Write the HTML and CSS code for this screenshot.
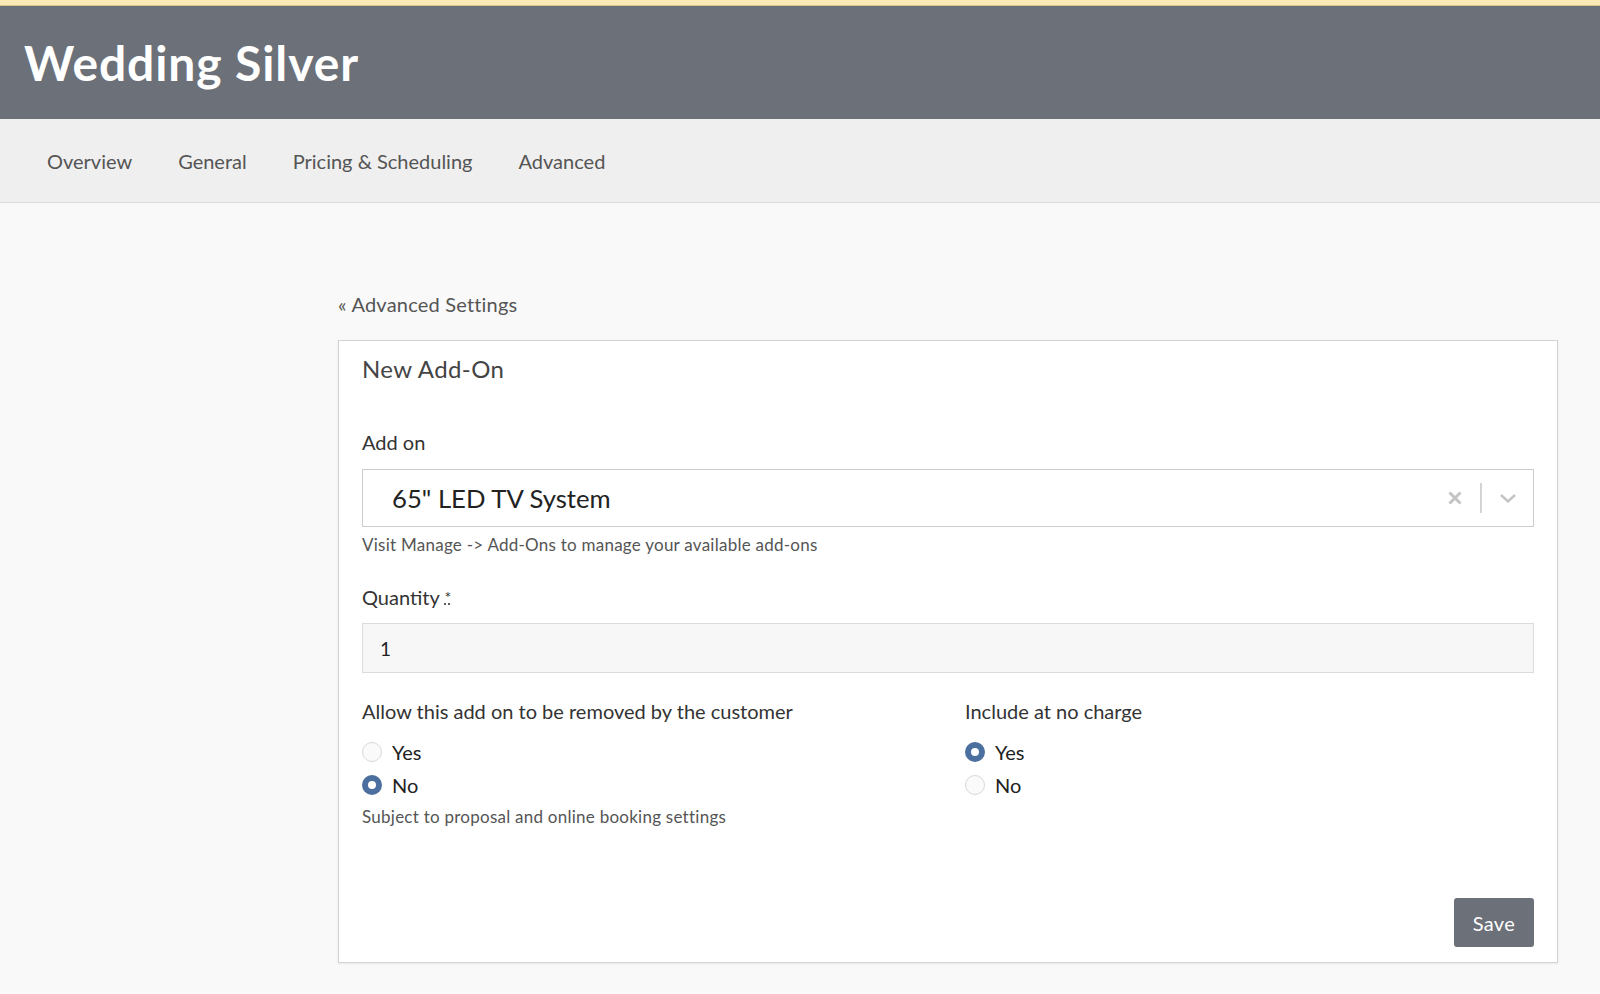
FILE: index.html
```html
<!DOCTYPE html>
<html lang="en">
<head>
  <meta charset="UTF-8" />
  <title>Wedding Silver - New Add-On</title>
  <link rel="stylesheet" href="styles.css">
</head>

<body>
  <div class="top-strip"></div>

  <!-- Package header -->
  <header class="page-header">
    <h1>Wedding Silver</h1>
  </header>

  <!-- Tabs -->
  <nav class="tabs">
    <a href="#">Overview</a>
    <a href="#">General</a>
    <a href="#">Pricing &amp; Scheduling</a>
    <a href="#">Advanced</a>
  </nav>

  <div class="main-content">
    <a href="#" class="back-link">&laquo; Advanced Settings</a>

    <div class="card">
      <h2 class="card-title">New Add-On</h2>

      <div class="field">
        <label class="field-label">Add on</label>
        <div class="select-box">
          <span class="select-value">65" LED TV System</span>
          <span class="select-clear">
            <svg width="16" height="16" viewBox="0 0 16 16">
              <path d="M2.5 2.5 L13.5 13.5 M13.5 2.5 L2.5 13.5" stroke="#c4c4c4" stroke-width="3" fill="none"/>
            </svg>
          </span>
          <span class="select-sep"></span>
          <span class="select-arrow">
            <svg width="18" height="10" viewBox="0 0 18 10">
              <path d="M2 2 L9 8.5 L16 2" stroke="#c4c4c4" stroke-width="2.4" fill="none"/>
            </svg>
          </span>
        </div>
        <div class="help-text">Visit Manage -&gt; Add-Ons to manage your available add-ons</div>
      </div>

      <div class="field">
        <label class="field-label">Quantity <abbr title="required">*</abbr></label>
        <input type="text" class="text-input" value="1" />
      </div>

      <div class="field-row">
        <div class="field-col">
          <div class="field-label">Allow this add on to be removed by the customer</div>
          <label class="radio"><span class="radio-dot"></span>Yes</label>
          <label class="radio"><span class="radio-dot checked"></span>No</label>
          <div class="help-text">Subject to proposal and online booking settings</div>
        </div>
        <div class="field-col">
          <div class="field-label">Include at no charge</div>
          <label class="radio"><span class="radio-dot checked"></span>Yes</label>
          <label class="radio"><span class="radio-dot"></span>No</label>
        </div>
      </div>

      <div class="card-actions">
        <button class="save-button">Save</button>
      </div>
    </div>
  </div>
</body>
</html>
```

FILE: styles.css
```css
/* Basic reset */
* {
  margin: 0;
  padding: 0;
  box-sizing: border-box;
  font-family: Lato, "Liberation Sans", sans-serif;
}

body {
  background-color: #f9f9f9;
  color: #333;
}

.top-strip {
  height: 6px;
  background-color: #fbeab5;
  border-bottom: 1px solid #d9c48a;
}

/* Dark header with package name */
.page-header {
  height: 113px;
  background-color: #6b7079;
  display: flex;
  align-items: center;
  padding-left: 24px;
}

.page-header h1 {
  color: #fff;
  font-size: 48px;
  font-weight: bold;
  letter-spacing: 0.9px;
}

/* Tabs */
.tabs {
  height: 84px;
  background-color: #efefef;
  border-bottom: 1px solid #dcdcdc;
  display: flex;
  align-items: center;
  padding-left: 24px;
}

.tabs a {
  text-decoration: none;
  color: #555;
  font-size: 20px;
  padding: 0 23px;
}

/* Main content area */
.main-content {
  padding: 89px 42px 40px 338px;
}

.back-link {
  display: block;
  text-decoration: none;
  color: #555;
  font-size: 20px;
  letter-spacing: 0.2px;
  line-height: 24px;
  margin-bottom: 24px;
}

.card {
  background-color: #fff;
  border: 1px solid #d4d4d4;
  box-shadow: 0 1px 2px rgba(0, 0, 0, 0.08);
  padding: 13px 23px 15px 23px;
}

.card-title {
  font-size: 24px;
  font-weight: normal;
  letter-spacing: 0.4px;
  color: #444;
  line-height: 30px;
  margin-bottom: 46px;
}

.field {
  margin-bottom: 30px;
}

.field-label {
  display: block;
  font-size: 20px;
  line-height: 24px;
  color: #333;
}

.field-label abbr {
  text-decoration: underline dotted;
  font-size: 16px;
  vertical-align: top;
}

/* Select with clear + arrow */
.select-box {
  margin-top: 15px;
  height: 58px;
  border: 1px solid #ccc;
  background-color: #fff;
  display: flex;
  align-items: center;
  padding-left: 29px;
}

.select-value {
  flex: 1;
  font-size: 25.7px;
  color: #222;
}

.select-clear {
  display: flex;
  width: 28px;
  justify-content: center;
  margin-right: 11px;
}

.select-sep {
  width: 2px;
  height: 30px;
  background-color: #d4d4d4;
}

.select-arrow {
  display: flex;
  width: 51px;
  justify-content: center;
}

.help-text {
  font-size: 17px;
  letter-spacing: 0.25px;
  line-height: 20px;
  color: #555;
  margin-top: 8px;
}

.text-input {
  display: block;
  width: 100%;
  margin-top: 14px;
  height: 50px;
  border: 1px solid #dcdcdc;
  background-color: #f7f7f7;
  padding: 0 17px;
  font-size: 19px;
  color: #222;
  outline: none;
}

/* Two radio groups side by side */
.field-row {
  display: grid;
  grid-template-columns: 603px 1fr;
  margin-top: -4px;
}

.field-row .field-label {
  margin-bottom: 12px;
}

.radio {
  display: flex;
  align-items: center;
  height: 33px;
  font-size: 20px;
  color: #222;
}

.radio-dot {
  width: 20px;
  height: 20px;
  border-radius: 50%;
  border: 1px solid #d8d8d8;
  background-color: #fafafa;
  margin-right: 10px;
}

.radio-dot.checked {
  border: 6px solid #4b6f9e;
  background-color: #fff;
}

.field-row .help-text {
  margin-top: 6px;
}

.card-actions {
  display: flex;
  justify-content: flex-end;
  margin-top: 71px;
}

.save-button {
  height: 49px;
  padding: 0 19px;
  border: none;
  border-radius: 3px;
  background-color: #6b7079;
  color: #fff;
  font-size: 20px;
  letter-spacing: 0.3px;
  cursor: pointer;
}
```
